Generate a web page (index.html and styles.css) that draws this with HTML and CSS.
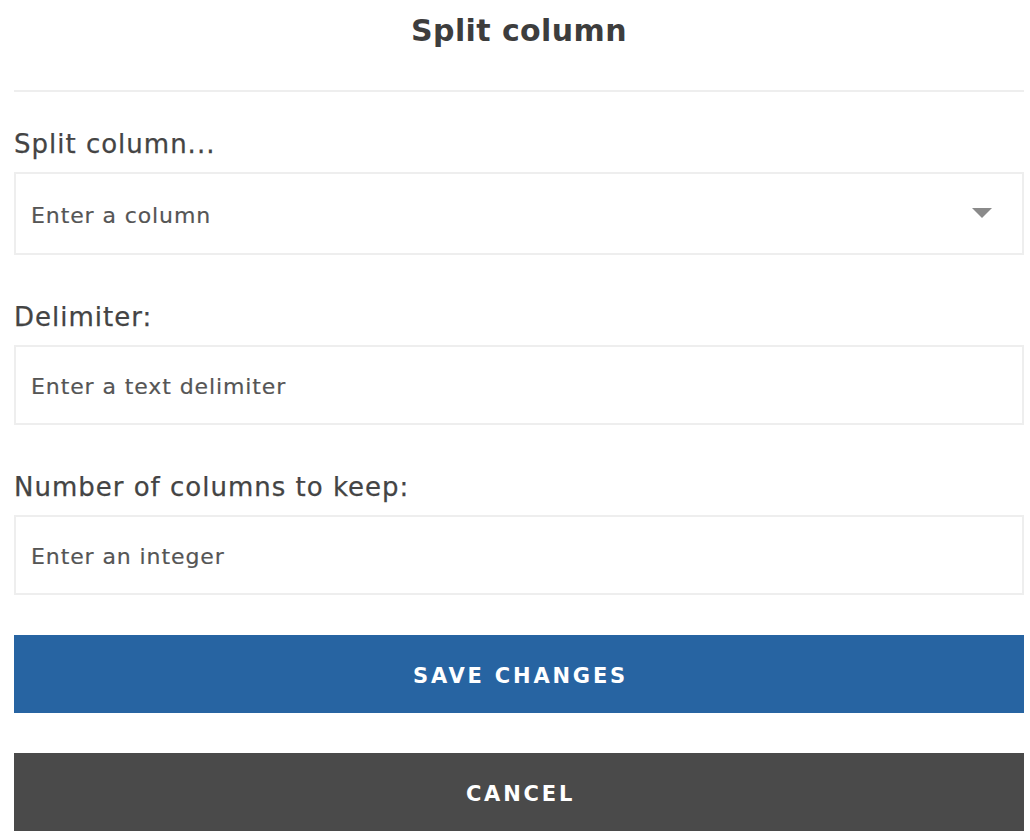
FILE: index.html
```html
<!DOCTYPE html>
<html>
<head>
<meta charset="utf-8">
<link rel="stylesheet" href="styles.css">
</head>
<body>
<div class="modal">
  <header class="modal-header">
    <h1 class="title">Split column</h1>
  </header>
  <form class="form">
    <div class="group">
      <label class="label">Split column...</label>
      <div class="field select">
        <span class="placeholder">Enter a column</span>
        <span class="caret"></span>
      </div>
    </div>
    <div class="group">
      <label class="label">Delimiter:</label>
      <div class="field">
        <span class="placeholder">Enter a text delimiter</span>
      </div>
    </div>
    <div class="group">
      <label class="label">Number of columns to keep:</label>
      <div class="field">
        <span class="placeholder">Enter an integer</span>
      </div>
    </div>
    <div class="actions">
      <button type="button" class="btn btn-primary">SAVE CHANGES</button>
      <button type="button" class="btn btn-dark">CANCEL</button>
    </div>
  </form>
</div>
</body>
</html>
```

FILE: styles.css
```css
html, body {
  margin: 0;
  padding: 0;
  background: #ffffff;
}
body {
  font-family: "DejaVu Sans", "Open Sans", sans-serif;
  color: #444444;
}
.modal {
  padding: 0 6px 0 14px;
}
.modal-header {
  height: 90px;
  border-bottom: 2px solid #eeeeee;
  display: flex;
  align-items: flex-start;
  justify-content: center;
}
.title {
  margin: 11px 0 0 0;
  font-size: 30px;
  line-height: 40px;
  font-weight: 700;
  color: #3d3d3d;
  letter-spacing: 0.4px;
}
.form {
  display: flex;
  flex-direction: column;
  padding-top: 31px;
}
.group {
  display: flex;
  flex-direction: column;
  margin-bottom: 41px;
}
.group:nth-child(3) {
  margin-bottom: 40px;
}
.label {
  font-size: 26px;
  line-height: 38px;
  font-weight: 400;
  color: #444444;
  margin-top: 2px;
  margin-bottom: 9px;
  letter-spacing: 1px;
  -webkit-text-stroke: 0.25px #444444;
}
.field {
  box-sizing: border-box;
  height: 80px;
  border: 2px solid #eeeeee;
  display: flex;
  align-items: center;
  justify-content: space-between;
  padding: 3px 30px 0 15px;
}
.select {
  height: 83px;
}
.placeholder {
  font-size: 22px;
  font-weight: 400;
  color: #555555;
  letter-spacing: 0.9px;
  -webkit-text-stroke: 0.2px #555555;
}
.caret {
  width: 0;
  height: 0;
  border-left: 10px solid transparent;
  border-right: 10px solid transparent;
  border-top: 10px solid #8a8a8a;
  margin-top: -4px;
}
.actions {
  display: flex;
  flex-direction: column;
  gap: 40px;
}
.btn {
  height: 78px;
  border: none;
  font-family: "DejaVu Sans", "Open Sans", sans-serif;
  font-size: 21px;
  font-weight: 700;
  letter-spacing: 2.8px;
  color: #ffffff;
  padding: 4px 0 0 3px;
}
.btn-primary {
  background: #2764a2;
}
.btn-dark {
  background: #4a4a4a;
}
```
